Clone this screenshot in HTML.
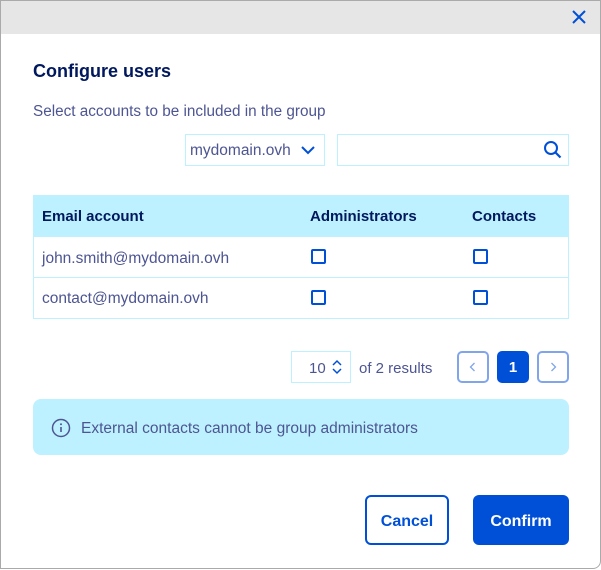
<!DOCTYPE html>
<html><head><style>
*{box-sizing:border-box;margin:0;padding:0}
body{width:601px;height:570px;background:#fff;font-family:"Liberation Sans",sans-serif;position:relative;overflow:hidden;color:#4d5592}
.modal{position:absolute;left:0;top:0;width:601px;height:569px;border:1px solid #aaa;border-radius:0 0 8px 0;background:#fff;overflow:hidden}
.hdr{position:absolute;left:0;top:0;right:0;height:33px;background:#e6e6e6}
.a{position:absolute}
h1{position:absolute;left:33px;top:61px;font-size:18px;font-weight:bold;color:#00185e}
.box{position:absolute;border:1px solid #bef1ff}
.cb{position:absolute;width:15px;height:15px;border:2px solid #0050d7;border-radius:2px}
.th{position:absolute;top:208px;font-size:15px;font-weight:bold;color:#00185e}
.td{position:absolute;font-size:15.5px}
.pg{position:absolute;top:351px;width:32px;height:32px;border:2px solid #80a5eb;border-radius:5px;color:#80a5eb;text-align:center;line-height:28px;font-size:14px}
</style></head><body>
<div class="modal"><div class="hdr"></div></div>
<svg class="a" style="left:572px;top:10px" width="14" height="14" viewBox="0 0 14 14"><path d="M1 1L13 13M13 1L1 13" stroke="#0050d7" stroke-width="2"/></svg>
<h1>Configure users</h1>
<div class="a" style="left:33px;top:103px;font-size:15.3px">Select accounts to be included in the group</div>
<div class="box" style="left:185px;top:134px;width:140px;height:32px"></div>
<div class="a" style="left:190px;top:142px;font-size:15.5px">mydomain.ovh</div>
<svg class="a" style="left:301px;top:145px" width="14" height="10"><path d="M1 2l6 6 6-6" fill="none" stroke="#0050d7" stroke-width="2"/></svg>
<div class="box" style="left:337px;top:134px;width:232px;height:32px"></div>
<svg class="a" style="left:543px;top:140px" width="20" height="20"><circle cx="8" cy="8" r="6" fill="none" stroke="#0050d7" stroke-width="2"/><path d="M12.5 12.5l5 5" stroke="#0050d7" stroke-width="2.2"/></svg>
<div class="box" style="left:33px;top:195px;width:536px;height:124px"></div>
<div class="a" style="left:33px;top:195px;width:536px;height:42px;background:#bef1ff"></div>
<div class="a" style="left:33px;top:277px;width:536px;height:1px;background:#bef1ff"></div>
<div class="th" style="left:42px">Email account</div>
<div class="th" style="left:310px">Administrators</div>
<div class="th" style="left:472px">Contacts</div>
<div class="td" style="left:42px;top:250px">john.smith@mydomain.ovh</div>
<div class="td" style="left:42px;top:290px">contact@mydomain.ovh</div>
<div class="cb" style="left:311px;top:249px"></div><div class="cb" style="left:473px;top:249px"></div>
<div class="cb" style="left:311px;top:290px"></div><div class="cb" style="left:473px;top:290px"></div>
<div class="box" style="left:291px;top:351px;width:60px;height:32px"></div>
<div class="a" style="left:309px;top:360px;font-size:15px">10</div>
<svg class="a" style="left:332px;top:359px" width="10" height="16"><path d="M1 6l4-4 4 4M1 10l4 4 4-4" fill="none" stroke="#0050d7" stroke-width="1.5"/></svg>
<div class="a" style="left:359px;top:360px;font-size:15px">of 2 results</div>
<div class="pg" style="left:457px"><svg width="28" height="28"><path d="M15.5 10l-4 4 4 4" fill="none" stroke="#80a5eb" stroke-width="1.3"/></svg></div>
<div class="pg" style="left:497px;background:#0050d7;border-color:#0050d7;color:#fff;font-weight:bold;font-size:15px;line-height:29px">1</div>
<div class="pg" style="left:537px"><svg width="28" height="28"><path d="M12.5 10l4 4-4 4" fill="none" stroke="#80a5eb" stroke-width="1.3"/></svg></div>
<div class="a" style="left:33px;top:399px;width:536px;height:56px;background:#bef1ff;border-radius:8px"></div>
<svg class="a" style="left:51px;top:418px" width="20" height="20"><circle cx="10" cy="10" r="8.5" fill="none" stroke="#4d5592" stroke-width="1.5"/><path d="M10 9v5" stroke="#4d5592" stroke-width="1.6"/><circle cx="10" cy="6.3" r="1" fill="#4d5592"/></svg>
<div class="a" style="left:81px;top:420px;font-size:15.5px">External contacts cannot be group administrators</div>
<div class="a" style="left:365px;top:495px;width:84px;height:50px;border:2px solid #0050d7;border-radius:6px;color:#0050d7;font-weight:bold;font-size:16px;text-align:center;line-height:50px">Cancel</div>
<div class="a" style="left:473px;top:495px;width:96px;height:50px;background:#0050d7;border-radius:6px;color:#fff;font-weight:bold;font-size:16px;text-align:center;line-height:53px">Confirm</div>
</body></html>
